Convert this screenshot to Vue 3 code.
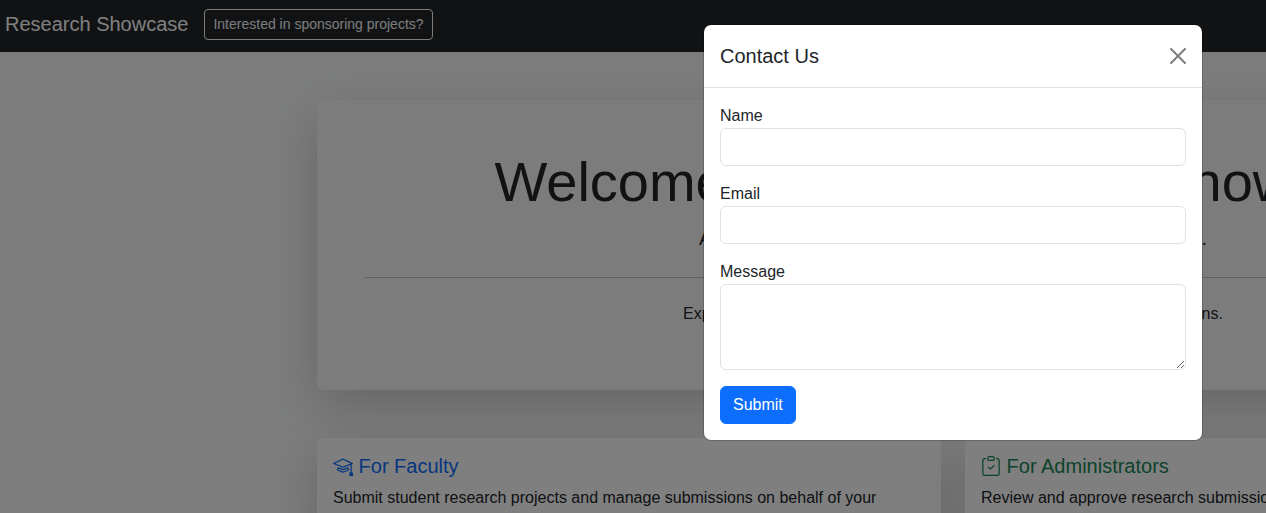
<script setup>
import { reactive } from 'vue'

const form = reactive({ name: '', email: '', message: '' })
</script>

<template>
  <div class="page">
    <nav class="navbar">
      <a class="brand" href="#">Research Showcase</a>
      <button type="button" class="btn-outline">Interested in sponsoring projects?</button>
    </nav>

    <main class="container">
      <section class="hero">
        <h1>Welcome to the Research Showcase</h1>
        <p class="lead">A platform for tracking and showcasing research projects.</p>
        <hr />
        <p>Explore research projects, submit your own work, and manage submissions.</p>
      </section>

      <div class="cards">
        <article class="card">
          <h5 class="faculty">
            <svg viewBox="0 0 16 16" fill="currentColor" aria-hidden="true">
              <path d="M8.211 2.047a.5.5 0 0 0-.422 0l-7.5 3.5a.5.5 0 0 0 .025.917l7.5 3a.5.5 0 0 0 .372 0L14 7.14V13a1 1 0 0 0-1 1v2h3v-2a1 1 0 0 0-1-1V6.739l.686-.275a.5.5 0 0 0 .025-.917zM8 8.46 1.758 5.965 8 3.052l6.242 2.913z" />
              <path d="M4.176 9.032a.5.5 0 0 0-.656.327l-.5 1.7a.5.5 0 0 0 .294.605l4.5 1.8a.5.5 0 0 0 .372 0l4.5-1.8a.5.5 0 0 0 .294-.605l-.5-1.7a.5.5 0 0 0-.656-.327L8 10.466zm-.068 1.873.22-.748 3.496 1.311a.5.5 0 0 0 .352 0l3.496-1.311.22.748L8 12.46z" />
            </svg>
            For Faculty
          </h5>
          <p>Submit student research projects and manage submissions on behalf of your students.</p>
        </article>
        <article class="card">
          <h5 class="admin">
            <svg viewBox="0 0 16 16" fill="currentColor" aria-hidden="true">
              <path fill-rule="evenodd" d="M10.854 7.146a.5.5 0 0 1 0 .708l-3 3a.5.5 0 0 1-.708 0l-1.5-1.5a.5.5 0 1 1 .708-.708L7.5 9.793l2.646-2.647a.5.5 0 0 1 .708 0" />
              <path d="M4 1.5H3a2 2 0 0 0-2 2V14a2 2 0 0 0 2 2h10a2 2 0 0 0 2-2V3.5a2 2 0 0 0-2-2h-1v1h1a1 1 0 0 1 1 1V14a1 1 0 0 1-1 1H3a1 1 0 0 1-1-1V3.5a1 1 0 0 1 1-1h1z" />
              <path d="M9.5 1a.5.5 0 0 1 .5.5v1a.5.5 0 0 1-.5.5h-3a.5.5 0 0 1-.5-.5v-1a.5.5 0 0 1 .5-.5zm-3-1A1.5 1.5 0 0 0 5 1.5v1A1.5 1.5 0 0 0 6.5 4h3A1.5 1.5 0 0 0 11 2.5v-1A1.5 1.5 0 0 0 9.5 0z" />
            </svg>
            For Administrators
          </h5>
          <p>Review and approve research submissions.</p>
        </article>
      </div>
    </main>

    <div class="overlay">
      <div class="modal" role="dialog" aria-modal="true" aria-labelledby="contact-title">
        <header class="modal-header">
          <h5 id="contact-title">Contact Us</h5>
          <button type="button" class="close" aria-label="Close">
            <svg viewBox="0 0 16 16" aria-hidden="true">
              <path d="M.293.293a1 1 0 0 1 1.414 0L8 6.586 14.293.293a1 1 0 1 1 1.414 1.414L9.414 8l6.293 6.293a1 1 0 0 1-1.414 1.414L8 9.414l-6.293 6.293a1 1 0 0 1-1.414-1.414L6.586 8 .293 1.707a1 1 0 0 1 0-1.414z" />
            </svg>
          </button>
        </header>
        <form class="modal-body" @submit.prevent>
          <div class="field">
            <label for="name">Name</label>
            <input id="name" v-model="form.name" type="text" />
          </div>
          <div class="field">
            <label for="email">Email</label>
            <input id="email" v-model="form.email" type="email" />
          </div>
          <div class="field">
            <label for="message">Message</label>
            <textarea id="message" v-model="form.message" rows="3"></textarea>
          </div>
          <button type="submit" class="submit">Submit</button>
        </form>
      </div>
    </div>
  </div>
</template>

<style>
html {
  overflow: hidden;
}
body {
  margin: 0;
  background: #f8f9fa;
}
</style>

<style scoped>
* {
  box-sizing: border-box;
}
.page {
  position: relative;
  min-width: 1906px;
  min-height: 100vh;
  font-family: "Liberation Sans", Arial, sans-serif;
  font-size: 16px;
  line-height: 24px;
  color: #212529;
  background: #f8f9fa;
}
h1,
h5,
p {
  margin: 0;
  font-weight: 400;
}
.navbar {
  display: flex;
  align-items: center;
  gap: 16px;
  padding: 4px 5px 8px;
  background: #212529;
}
.brand {
  padding: 5px 0;
  font-size: 20px;
  line-height: 30px;
  color: #fff;
  text-decoration: none;
}
.btn-outline {
  padding: 4px 8px;
  border: 1px solid #f8f9fa;
  border-radius: 4px;
  background: transparent;
  color: #f8f9fa;
  font: inherit;
  font-size: 14px;
  line-height: 21px;
}
.container {
  max-width: 1272px;
  margin: 48px auto 0;
  padding-bottom: 48px;
}
.hero {
  padding: 48px 48px 64px;
  border-radius: 6px;
  background: #f8f9fa;
  text-align: center;
  box-shadow: 0 16px 48px rgba(0, 0, 0, 0.175);
}
.hero h1 {
  margin-bottom: 8px;
  font-size: 56px;
  line-height: 67px;
}
.lead {
  font-size: 20px;
  line-height: 30px;
}
hr {
  margin: 24px 0;
  border: 0;
  border-top: 1px solid #212529;
  opacity: 0.25;
}
.cards {
  display: grid;
  grid-template-columns: 1fr 1fr;
  gap: 24px;
  margin-top: 48px;
}
.card {
  min-height: 160px;
  padding: 16px;
  border-radius: 6px;
  background: #fff;
  box-shadow: 0 16px 48px rgba(0, 0, 0, 0.175);
}
.card h5 {
  margin-bottom: 8px;
  font-size: 20px;
  line-height: 24px;
}
.card svg {
  width: 20px;
  height: 20px;
  vertical-align: -0.125em;
}
.faculty {
  color: #0d6efd;
}
.admin {
  color: #198754;
}
.overlay {
  position: absolute;
  inset: 0;
  display: flex;
  align-items: flex-start;
  justify-content: center;
  padding-top: 24px;
  background: rgba(0, 0, 0, 0.5);
}
.modal {
  width: 100%;
  max-width: 500px;
  border: 1px solid rgba(0, 0, 0, 0.175);
  border-radius: 8px;
  background: #fff;
  background-clip: padding-box;
}
.modal-header {
  display: flex;
  align-items: center;
  justify-content: space-between;
  padding: 16px;
  border-bottom: 1px solid #dee2e6;
}
.modal-header h5 {
  font-size: 20px;
  line-height: 30px;
}
.close {
  display: flex;
  padding: 0;
  border: 0;
  background: transparent;
  opacity: 0.5;
}
.close svg {
  width: 16px;
  height: 16px;
}
.modal-body {
  padding: 16px;
}
.field {
  display: flex;
  flex-direction: column;
  margin-bottom: 16px;
}
input,
textarea {
  width: 100%;
  padding: 6px 12px;
  border: 1px solid #dee2e6;
  border-radius: 6px;
  background: #fff;
  color: #212529;
  font: inherit;
}
textarea {
  resize: vertical;
}
.submit {
  padding: 6px 12px;
  border: 1px solid #0d6efd;
  border-radius: 6px;
  background: #0d6efd;
  color: #fff;
  font: inherit;
}
</style>
